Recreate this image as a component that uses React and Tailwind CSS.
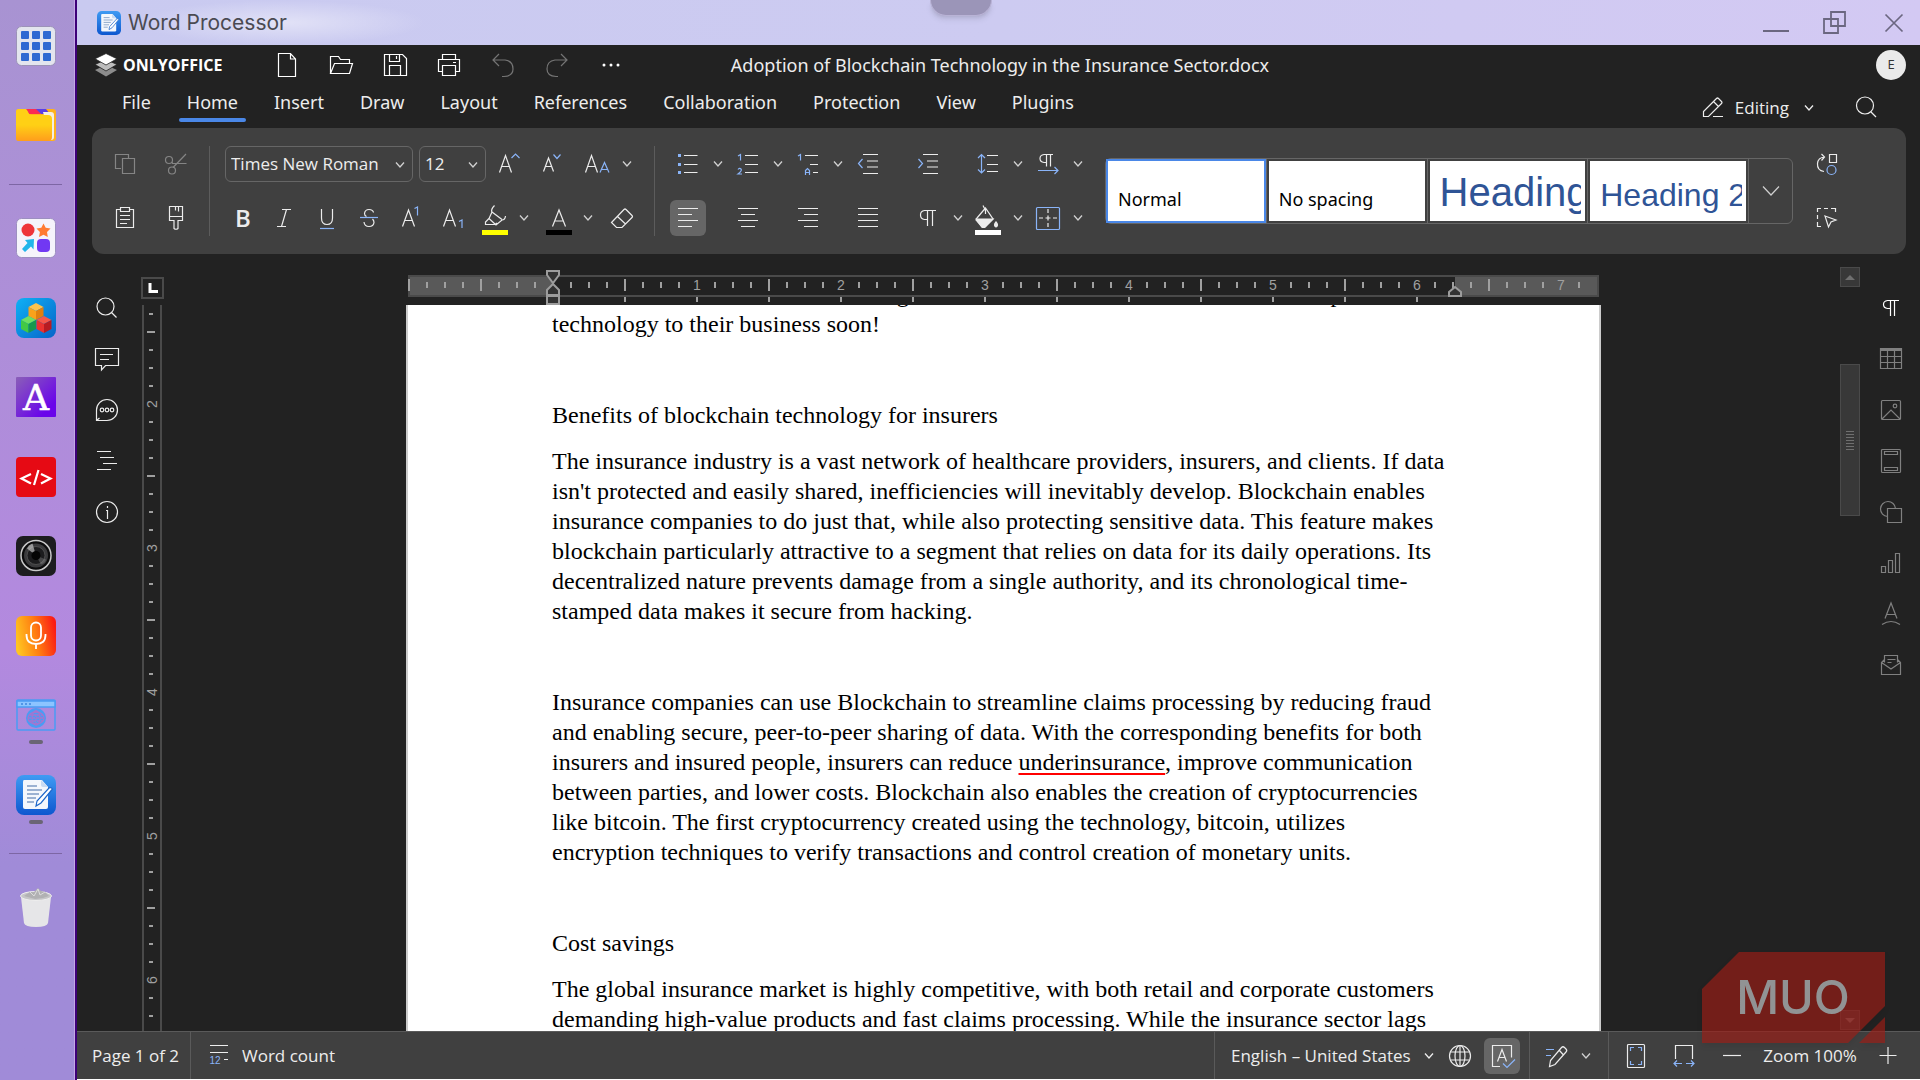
import React, { useState } from 'react';

const Icon = ({ size = 28, className = '', children }) => (
    <svg
        width={size}
        height={size}
        viewBox={`0 0 ${size} ${size}`}
        fill="none"
        stroke="currentColor"
        strokeWidth="1.2"
        className={`shrink-0 overflow-visible ${className}`}
        aria-hidden="true"
    >
        {children}
    </svg>
);

const BLUE = '#8ab4f8';

const Chevron = () => (
    <svg width="10" height="8" viewBox="0 0 10 8" fill="none" stroke="currentColor" strokeWidth="1.3" aria-hidden="true">
        <path d="M1 1.5 5 6 9 1.5" />
    </svg>
);

const ToolButton = ({ label, active, disabled, children }) => (
    <button
        type="button"
        aria-label={label}
        className={`flex h-9 w-9 shrink-0 items-center justify-center rounded-md ${active ? 'bg-[#666]' : ''} ${disabled ? 'text-[#858585]' : 'text-[#ececec]'}`}
    >
        {children}
    </button>
);

const MenuButton = ({ label, className = 'w-6' }) => (
    <button type="button" aria-label={`${label} options`} className={`flex h-9 shrink-0 items-center justify-center text-[#d0d0d0] ${className}`}>
        <Chevron />
    </button>
);

/* ---------- desktop dock ---------- */

const WordAppIcon = ({ className }) => (
    <svg viewBox="0 0 40 40" className={className} aria-hidden="true">
        <defs>
            <linearGradient id="wordBg" x1="0" y1="0" x2="0" y2="1">
                <stop offset="0" stopColor="#3f9bf3" />
                <stop offset="1" stopColor="#0d57cf" />
            </linearGradient>
        </defs>
        <rect width="40" height="40" rx="8" fill="url(#wordBg)" />
        <path d="M8 5h18l6 7v20a2 2 0 0 1-2 2H9a2 2 0 0 1-2-2V7q0-2 1-2z" fill="#f4f7fc" />
        <path d="m25 5 7 7h-5q-2 0-2-2z" fill="#c9dbf2" />
        <path d="M11 11h10M11 15h15M11 19h12M11 23h9M11 27h7" stroke="#7f9cc4" strokeWidth="1.4" />
        <path d="m20 31 1-5 12-13q2-1 3.500 1L25 28z" fill="#fff" stroke="#1d66c9" strokeWidth="1.2" />
    </svg>
);

const AppsIcon = () => (
    <svg viewBox="0 0 40 40" className="size-10" aria-hidden="true">
        <rect x=".5" y=".5" width="39" height="39" rx="5" fill="#e3e5ee" stroke="#9c93b8" />
        {[5, 16, 27].map((y) =>
            [5, 16, 27].map((x) => <rect key={`${x}${y}`} x={x} y={y} width="8" height="8" rx="1" fill="#2f69d2" />)
        )}
    </svg>
);

const FolderIcon = () => (
    <svg viewBox="0 0 40 40" className="size-10" aria-hidden="true">
        <defs>
            <linearGradient id="folder" x1="0" y1="0" x2="0" y2="1">
                <stop offset=".5" stopColor="#ffd015" />
                <stop offset="1" stopColor="#ff9d1c" />
            </linearGradient>
        </defs>
        <rect x="0" y="4" width="40" height="32" rx="3" fill="#ffb21a" />
        <path d="M10 4h11l4 5H13z" fill="#fb2c53" />
        <path d="M20 4h10l4 5h-9z" fill="#5b3fe6" />
        <path d="M27 7h8q3 0 3 3v22q0 3-3 3z" fill="#f4efe2" />
        <path d="M0 7q0-3 3-3h6q2 0 3 3t4 3h16q4 0 4 4v18q0 4-4 4H3q-3 0-3-3z" fill="url(#folder)" />
    </svg>
);

const ShapesAppIcon = () => (
    <svg viewBox="0 0 40 40" className="size-10" aria-hidden="true">
        <rect x=".5" y=".5" width="39" height="39" rx="5" fill="#f5f3fb" stroke="#9c8fc0" />
        <circle cx="12" cy="12" r="6.500" fill="#ee3439" />
        <path d="m27.500 5.500 2.200 4.300 4.800.7-3.500 3.500.8 5-4.300-2.300-4.500 2.300.9-5-3.400-3.500 4.800-.7z" fill="#ff7b33" />
        <path d="M18 21 9 22l2.500 3L6 31l3 3 6-5.500 2.500 3z" fill="#21b5ea" />
        <rect x="21" y="21" width="13" height="13" rx="4" fill="#7138f3" />
    </svg>
);

const Cube = ({ x, y, top, left, right }) => (
    <g transform={`translate(${x} ${y})`}>
        <path d="m0 4 7.500-4L15 4 7.500 8z" fill={top} />
        <path d="m0 4 7.500 4v9L0 13z" fill={left} />
        <path d="M15 4 7.500 8v9l7.500-4z" fill={right} />
    </g>
);

const CubesIcon = () => (
    <svg viewBox="0 0 40 40" className="size-10" aria-hidden="true">
        <defs>
            <linearGradient id="cubes" x1="0" y1="0" x2="1" y2="1">
                <stop offset="0" stopColor="#0fb1f5" />
                <stop offset="1" stopColor="#0764c8" />
            </linearGradient>
        </defs>
        <rect width="40" height="40" rx="8" fill="url(#cubes)" />
        <Cube x={12.5} y={5} top="#fdc34c" left="#f9a21b" right="#e07f10" />
        <Cube x={5} y={18} top="#6fe060" left="#43c944" right="#17984e" />
        <Cube x={20.5} y={18} top="#f5574a" left="#ea3330" right="#b81c22" />
    </svg>
);

const LetterIcon = () => (
    <svg viewBox="0 0 40 40" className="size-10" aria-hidden="true">
        <defs>
            <linearGradient id="letter" x1="0" y1="0" x2="1" y2="1">
                <stop offset="0" stopColor="#8a5fb8" />
                <stop offset=".8" stopColor="#6a05ea" />
            </linearGradient>
        </defs>
        <rect width="40" height="40" rx="1" fill="url(#letter)" />
        <text x="20" y="33" textAnchor="middle" fontFamily="'DejaVu Serif', serif" fontSize="36" fill="#fff" stroke="#fff" strokeWidth=".5">A</text>
    </svg>
);

const CodeIcon = () => (
    <svg viewBox="0 0 40 40" className="size-10" aria-hidden="true">
        <rect width="40" height="40" rx="4" fill="#e60a14" />
        <path d="m15 17-9.500 4.500L15 26.500M25 17l9.500 4.500-9.500 5M22.500 13l-4.500 15" fill="none" stroke="#fff" strokeWidth="2.200" />
    </svg>
);

const CameraIcon = () => (
    <svg viewBox="0 0 40 40" className="size-10" aria-hidden="true">
        <rect width="40" height="40" rx="7" fill="#1d1d1f" />
        <circle cx="20" cy="19.500" r="15" fill="#0b0b0c" stroke="#c9c9c9" strokeWidth="1.500" />
        <circle cx="20" cy="19.500" r="12" fill="#3a3a3c" />
        <circle cx="20" cy="19.500" r="9" fill="#1c1c1e" stroke="#555" strokeWidth=".8" />
        <path d="m20 19.500-9-7q2-4 5.500-5z" fill="#d8d8d8" opacity=".6" />
        <path d="m20 19.500 5 9q4-1 5-5z" fill="#aaa" opacity=".3" />
        <circle cx="20" cy="19.500" r="4.500" fill="#050505" />
    </svg>
);

const MicIcon = () => (
    <svg viewBox="0 0 40 40" className="size-10" aria-hidden="true">
        <defs>
            <linearGradient id="mic" x1="0" y1=".6" x2="1" y2=".4">
                <stop offset="0" stopColor="#ffc521" />
                <stop offset=".5" stopColor="#ff7d11" />
                <stop offset="1" stopColor="#fb1b14" />
            </linearGradient>
        </defs>
        <rect width="40" height="40" rx="6" fill="url(#mic)" />
        <g fill="none" stroke="#fff" strokeWidth="1.800">
            <rect x="15" y="6.500" width="10" height="18" rx="5" />
            <path d="M10.500 18v1q0 9 9.500 9t9.500-9v-1M20 28v5" />
        </g>
    </svg>
);

const BrowserIcon = () => (
    <svg viewBox="0 0 40 40" className="size-10" aria-hidden="true">
        <g fill="none" stroke="#4a9cf4" strokeWidth="1.500">
            <rect x="1" y="5" width="38" height="30" rx="1" />
            <path d="M1 6h38v6H1z" fill="#8cc4ff" />
        </g>
        <path d="M5 9h2M9 9h2M13 9h2" stroke="#3f86e0" strokeWidth="1.500" />
        <circle cx="20" cy="23" r="10" fill="#4a9cf4" />
        <g fill="none" stroke="#a476cf" strokeWidth="1.300">
            <ellipse cx="20" cy="23" rx="8" ry="6" />
            <ellipse cx="20" cy="23" rx="4" ry="7" />
            <path d="M20 15v16M12 23h16M13 20h14M13 26h14" strokeDasharray="3 1" />
        </g>
    </svg>
);

const TrashIcon = () => (
    <svg viewBox="0 0 40 40" className="size-10" aria-hidden="true">
        <path d="M5 10h30l-3 26q-1 4-12 4T8 36z" fill="#e6e6e8" />
        <ellipse cx="20" cy="9" rx="15.500" ry="4.500" fill="#c6c6c8" stroke="#eee" />
        <path d="m8 9 6-4 4 0 4-4 3 3 4 1 4 4-6 2-8 1z" fill="#b1b1b3" />
        <path d="m14 5 4 4 4-7 2 6 5-3" fill="none" stroke="#dcdcdc" />
    </svg>
);

const dockApps = [
    { name: 'Creative Suite', icon: <ShapesAppIcon /> },
    { name: 'Blocks', icon: <CubesIcon /> },
    { name: 'Font Manager', icon: <LetterIcon /> },
    { name: 'Code Editor', icon: <CodeIcon /> },
    { name: 'Camera', icon: <CameraIcon /> },
    { name: 'Voice Recorder', icon: <MicIcon /> },
    { name: 'Browser', icon: <BrowserIcon />, running: true },
    { name: 'Word Processor', icon: <WordAppIcon className="size-10" />, running: true },
];

const Dock = () => (
    <aside className="flex w-[77px] shrink-0 flex-col items-center border-r-2 border-[#3d0078] bg-linear-to-b from-[#a893d2] via-[#b389df] via-60% to-[#a08bd8] to-80% pt-[26px] pr-1 shadow-[inset_-1px_0_0_#c3a8e6]">
        <button type="button" aria-label="Applications"><AppsIcon /></button>
        <button type="button" aria-label="Files" className="mt-[39px]"><FolderIcon /></button>
        <hr className="mt-[39px] w-[53px] border-[#7d66a4]" />
        <ul className="mt-[33px] flex h-[597px] flex-col justify-between">
            {dockApps.map((app) => (
                <li key={app.name} className="relative h-10">
                    <button type="button" aria-label={app.name}>{app.icon}</button>
                    {app.running && <span className="absolute -bottom-[9px] left-[13px] h-1 w-[14px] rounded-full bg-[#6a6575]" />}
                </li>
            ))}
        </ul>
        <hr className="mt-[38px] w-[53px] border-[#7d66a4]" />
        <button type="button" aria-label="Trash" className="mt-[33px]"><TrashIcon /></button>
    </aside>
);

/* ---------- window chrome ---------- */

const TitleBar = () => (
    <div className="relative flex h-[45px] shrink-0 items-center bg-linear-to-r from-[#c9caf0] via-[#cdcbf1] to-[#d3c9f3] pr-3 pl-[20px]">
        <div className="absolute inset-y-0 left-[60px] w-[290px] bg-radial from-white/45 to-transparent to-70%" />
        <WordAppIcon className="relative size-6" />
        <span className="relative ml-[7px] font-['Inter',sans-serif] text-[21px] text-[#4a4a52]">Word Processor</span>
        <div className="absolute top-0 left-1/2 ml-[-69px] h-4 w-[62px] rounded-b-2xl border border-t-0 border-[#b9b3d6] bg-[#9b95b8] shadow-md" />
        <div className="ml-auto flex items-center gap-[31px] text-[#6b6780]">
            <button type="button" aria-label="Minimize">
                <Icon><path d="M1 22h26" strokeWidth="2" /></Icon>
            </button>
            <button type="button" aria-label="Restore">
                <Icon>
                    <path d="M10 3h14v14H10zM3 10h14v14H3z" strokeWidth="1.800" />
                </Icon>
            </button>
            <button type="button" aria-label="Close">
                <Icon><path d="m5.500 5.500 17 17M22.500 5.500l-17 17" strokeWidth="1.700" /></Icon>
            </button>
        </div>
    </div>
);

const quickActions = [
    { label: 'New', path: <path d="M5.500 2.500h12l5 5.500v17.500h-17zM17.500 2.500V8h5" /> },
    { label: 'Open', path: <path d="M3.500 22.500v-17h8l2 3h9v4M3.500 22.500l4-10h18l-3 10z" /> },
    { label: 'Save', path: <path d="M3.500 3.500h18l4 4v17h-22zM8.500 3.500v7h10v-7M15.500 5v3M8.500 24.500v-10h11v10" /> },
    { label: 'Print', path: <path d="M7.500 8.500v-5h13v5M7.500 20.500h-4v-12h21v12h-4M7.500 14.500h13v10h-13zM18 11.500h3" /> },
    { label: 'Undo', disabled: true, path: <path d="m10 3-6 6 6 6M4 9h12q8 1 8 9 0 7-9 7.500h-2" /> },
    { label: 'Redo', disabled: true, path: <path d="m18 3 6 6-6 6M24 9H12q-8 1-8 9 0 7 9 7.500h2" /> },
    {
        label: 'More',
        path: (
            <g fill="currentColor" stroke="none">
                <circle cx="7" cy="14" r="1.500" />
                <circle cx="14" cy="14" r="1.500" />
                <circle cx="21" cy="14" r="1.500" />
            </g>
        ),
    },
];

const HeaderRow = () => (
    <div className="grid h-10 shrink-0 grid-cols-[1fr_auto_1fr] items-center pr-[14px] pl-[17px]">
        <div className="flex items-center">
            <svg width="24" height="24" viewBox="0 0 24 24" aria-hidden="true">
                <path d="m12 12 11 5-11 6.500L1 17z" fill="#8c8c8c" />
                <path d="m12 6.500 11 5L12 18 1 11.500z" fill="#bdbdbd" stroke="#222" strokeWidth=".8" />
                <path d="m12 .5 11 5.300L12 12 1 5.800z" fill="#fff" stroke="#222" strokeWidth=".8" />
            </svg>
            <span className="ml-[5px] w-[102px] text-[16px] font-bold text-white">ONLYOFFICE</span>
            <div className="ml-11 flex gap-[18px]">
                {quickActions.map((a) => (
                    <button key={a.label} type="button" aria-label={a.label} className={`flex h-9 w-9 items-center justify-center ${a.disabled ? 'text-[#757575]' : 'text-white'}`}>
                        <Icon>{a.path}</Icon>
                    </button>
                ))}
            </div>
        </div>
        <h1 className="pt-px font-['Noto_Sans',sans-serif] text-[18px] text-[#ededed]">Adoption of Blockchain Technology in the Insurance Sector.docx</h1>
        <span className="flex size-[30px] items-center justify-center justify-self-end rounded-full bg-[#eaeaea] text-[13px] text-[#333]">E</span>
    </div>
);

const tabs = ['File', 'Home', 'Insert', 'Draw', 'Layout', 'References', 'Collaboration', 'Protection', 'View', 'Plugins'];

const TabRow = ({ active, onSelect }) => (
    <div className="flex h-[43px] shrink-0 items-start pl-[37px]">
        <nav className="flex gap-5">
            {tabs.map((tab) => (
                <button key={tab} type="button" onClick={() => onSelect(tab)} className="flex flex-col px-2 pt-[2px] font-['Noto_Sans',sans-serif] text-[18px] leading-[31px] text-[#ededed]">
                    {tab}
                    <span className={`-mx-2 h-1 self-stretch rounded-xs ${tab === active ? 'bg-[#4a87e7]' : ''}`} />
                </button>
            ))}
        </nav>
        <div className="mt-[5px] ml-auto flex items-center pr-10 text-[#ededed]">
            <button type="button" className="flex h-9 items-center text-[17px]">
                <Icon>
                    <path d="M4.500 22.500v-5l13-13q1-1 2 0l3 3q1 1 0 2l-13 13zM14.500 7.500l5 5M14 22.500h10" />
                </Icon>
                <span className="mr-[15px] ml-2">Editing</span>
                <Chevron />
            </button>
            <button type="button" aria-label="Search" className="ml-[38px]">
                <Icon>
                    <circle cx="13" cy="11.500" r="8.500" />
                    <path d="m19 18 5 5" />
                </Icon>
            </button>
        </div>
    </div>
);

/* ---------- ribbon ---------- */

const Divider = () => <div className="mr-[15px] ml-[13px] h-[90px] w-px bg-[#5c5c5c]" />;

const SelectBox = ({ label, value, options, className }) => (
    <div className={`relative ${className}`}>
        <select aria-label={label} defaultValue={value} className="h-9 w-full appearance-none rounded-md border border-[#666] bg-transparent pl-[5px] text-[17px] text-[#ededed]">
            {options.map((o) => <option key={o}>{o}</option>)}
        </select>
        <span className="pointer-events-none absolute top-[15px] right-2 text-[#d0d0d0]"><Chevron /></span>
    </div>
);

const ClipboardGroup = () => (
    <div className="mr-[2px] ml-[15px] grid grid-cols-[36px_36px] gap-x-[15px] gap-y-[18px]">
        <ToolButton label="Copy" disabled>
            <Icon><path d="M10 18.500H4.500v-14h13V8M11.500 8.500h12v15h-12z" /></Icon>
        </ToolButton>
        <ToolButton label="Cut" disabled>
            <Icon>
                <circle cx="7" cy="10" r="3.500" />
                <circle cx="10" cy="20.500" r="3.500" />
                <path d="M24 4 11 17.500M24.500 13.500h-14L10 12" />
            </Icon>
        </ToolButton>
        <ToolButton label="Paste">
            <Icon><path d="M9.500 5.500h-4v18h17v-18h-4M9.500 3.500h9v4h-9zM9 11.500h10M9 15.500h10M9 19.500h7" /></Icon>
        </ToolButton>
        <ToolButton label="Copy style">
            <Icon><path d="M7.500 2.500h13v14H16v8q-2 1.500-4 0v-8H7.500zM7.500 12.500h13M13.500 2.500v4M16.500 2.500v5" /></Icon>
        </ToolButton>
    </div>
);

const FontGroup = () => (
    <div className="flex flex-col gap-[18px]">
        <div className="flex gap-[6px]">
            <SelectBox label="Font" value="Times New Roman" options={['Times New Roman', 'Arial', 'Courier New']} className="w-[188px]" />
            <SelectBox label="Font size" value="12" options={['10', '11', '12', '14']} className="w-[67px]" />
            <ToolButton label="Increase font size">
                <Icon>
                    <path d="m3.500 22.500 6-17 6 17M5.500 16.500h8" />
                    <path d="m15.500 8 4-4 4 4" stroke={BLUE} />
                </Icon>
            </ToolButton>
            <ToolButton label="Decrease font size">
                <Icon>
                    <path d="M5.500 21.500 10.500 8l5 13.500M7.500 16.500h6.500" />
                    <path d="m15.500 4.500 3.500 4 3.500-4" stroke={BLUE} />
                </Icon>
            </ToolButton>
            <div className="flex">
                <div className="flex w-[42px] justify-center">
                    <ToolButton label="Change case">
                        <Icon>
                            <path d="m2.500 22.500 6-17 6 17M4.500 16.500h8" />
                            <path d="m17 22.500 4.500-10 4.500 10M18.500 19.500h6" stroke={BLUE} />
                        </Icon>
                    </ToolButton>
                </div>
                <MenuButton label="Change case" className="w-[18px]" />
            </div>
        </div>
        <div className="flex gap-[6px]">
            <ToolButton label="Bold"><span className="text-[24px] leading-none font-semibold">B</span></ToolButton>
            <ToolButton label="Italic">
                <Icon><path d="M11 5.500h9M6 22.500h9M15.500 5.500l-5 17" /></Icon>
            </ToolButton>
            <ToolButton label="Underline">
                <Icon>
                    <path d="M8.500 5v9q0 6.500 5.500 6.500t5.500-6.500V5" />
                    <path d="M7 24.500h14" stroke={BLUE} />
                </Icon>
            </ToolButton>
            <ToolButton label="Strikeout">
                <Icon>
                    <path d="M18.500 8.500q-.5-3-4.500-3t-4.500 4q0 2 2 3M9 18q.5 4.500 5 4.500t5-4q0-2-1.500-3.500" />
                    <path d="M5 13.500h18" stroke={BLUE} />
                </Icon>
            </ToolButton>
            <ToolButton label="Superscript">
                <Icon>
                    <path d="m5.500 22.500 6-16.500 6 16.500M7.500 16.500h8" />
                    <path d="m17.500 4.500 3-1.500v8.500" stroke={BLUE} />
                </Icon>
            </ToolButton>
            <ToolButton label="Subscript">
                <Icon>
                    <path d="m4.500 22.500 6-16.500 6 16.500M6.500 16.500h8" />
                    <path d="m20 17.500 3-1.500v8" stroke={BLUE} />
                </Icon>
            </ToolButton>
            <div className="flex">
                <ToolButton label="Highlight color">
                    <Icon>
                        <path d="M13.500 1.500q-4 4-2.500 7M11 8l-3 6.500 7 6.500 6-5q3 0 3.500-4M21 15.500 11 8M8 14.500 4.500 18v2.500h9.500l2-1.500" />
                        <path d="M1 26h26v5H1z" fill="#ff0" stroke="none" />
                    </Icon>
                </ToolButton>
                <MenuButton label="Highlight color" className="w-[22px]" />
            </div>
            <div className="flex">
                <ToolButton label="Font color">
                    <Icon>
                        <path d="M7.500 22.500 14 6l6.500 16.500M9.500 17h9" />
                        <path d="M1 26h26v5H1z" fill="#000" stroke="none" />
                    </Icon>
                </ToolButton>
                <MenuButton label="Font color" className="w-[22px]" />
            </div>
            <ToolButton label="Clear style">
                <Icon><path d="M2.500 18.500 15 5.500q1-1 2 0l6 6q1 1 0 2L13 23.500H7.500zM8.500 12.500l8 7.500" /></Icon>
            </ToolButton>
        </div>
    </div>
);

const paragraphTools = [
    {
        label: 'Bullets',
        menu: true,
        art: (
            <>
                <path d="M10 5.500h13.500M10 14.500h13.500M10 22.500h13.500" />
                <path d="M4 5.500h3M4 14.500h3M4 22.500h3" stroke={BLUE} strokeWidth="3" />
            </>
        ),
    },
    {
        label: 'Numbering',
        menu: true,
        art: (
            <>
                <path d="M11 5.500h13M11 14.500h13M11 22.500h13" />
                <path d="m4 6 2.500-1.500v6M4 19.500q1.500-2 3-.5t-3 5h4" stroke={BLUE} />
            </>
        ),
    },
    {
        label: 'Multilevel list',
        menu: true,
        art: (
            <>
                <path d="M11 5.500h13M16 14.500h8M19 22.500h5" />
                <path d="m4 6 2.500-1.500v6M11.500 25v-4.500l2-2 2 2V25M11.500 22.500h4" stroke={BLUE} />
            </>
        ),
    },
    {
        label: 'Decrease indent',
        art: (
            <>
                <path d="M9 4.500h15M13 11h11M13 17h11M9 23.500h15" />
                <path d="m8.500 9-4 4.500 4 4.500" stroke={BLUE} />
            </>
        ),
    },
    {
        label: 'Increase indent',
        art: (
            <>
                <path d="M9 4.500h15M13 11h11M13 17h11M9 23.500h15" />
                <path d="m4.500 9 4 4.500-4 4.500" stroke={BLUE} />
            </>
        ),
    },
    {
        label: 'Line spacing',
        menu: true,
        art: (
            <>
                <path d="M13 5.500h11M13 14.500h11M13 21.500h11" />
                <path d="M7.500 4.500v18M4 8l3.500-3.500L11 8M4 19.500 7.500 23l3.500-3.500" stroke={BLUE} />
            </>
        ),
    },
    {
        label: 'Text direction',
        menu: true,
        art: (
            <>
                <path d="M19 4.500H10q-4 .5-4 4t4 4h2M12.500 4.500v12M16.500 4.500v12" />
                <path d="M4 20.500h20M20.500 17l3.500 3.500-3.500 3.500" stroke={BLUE} />
            </>
        ),
    },
    { label: 'Align left', active: true, art: <path d="M4 4.500h20M4 10.500h14M4 16.500h20M4 22.500h14" /> },
    { label: 'Align center', art: <path d="M4 4.500h20M7 10.500h14M4 16.500h20M7 22.500h14" /> },
    { label: 'Align right', art: <path d="M4 4.500h20M10 10.500h14M4 16.500h20M10 22.500h14" /> },
    { label: 'Justified', art: <path d="M4 4.500h20M4 10.500h20M4 16.500h20M4 22.500h20" /> },
    {
        label: 'Nonprinting characters',
        menu: true,
        art: <path d="M22 6.500H10.500q-4 .5-4 4.500t4 4.500H13M13.500 6.500v15.500M18.500 6.500v15.500" />,
    },
    {
        label: 'Shading',
        menu: true,
        art: (
            <>
                <path d="m9 1.500 2.500 5M11.500 4 3 14q-2 2 0 3l5 6q1.500 1 3 0l8-8zM11.500 4v6" />
                <path d="M2.500 15H19l-8 8q-1.500 1-3 0z" fill="currentColor" />
                <path d="M22 18q3 3.500 0 5-3-1.500 0-5z" fill="currentColor" />
                <path d="M1 26h26v5H1z" fill="#fff" stroke="none" />
            </>
        ),
    },
    {
        label: 'Borders',
        menu: true,
        art: (
            <>
                <path d="M14 5v4M14 11.500v5M14 19v4M5 14h4M11.500 14h5M19 14h4" />
                <rect x="2.500" y="3.500" width="23" height="22" rx="1" stroke={BLUE} />
            </>
        ),
    },
];

const ParagraphGroup = () => (
    <div className="grid grid-cols-[repeat(7,60px)] gap-y-[18px]">
        {paragraphTools.map((tool) => (
            <div key={tool.label} className="flex">
                <ToolButton label={tool.label} active={tool.active}><Icon>{tool.art}</Icon></ToolButton>
                {tool.menu && <MenuButton label={tool.label} />}
            </div>
        ))}
    </div>
);

const textStyles = [
    { name: 'Normal', look: "pt-[26px] font-['Noto_Sans',sans-serif] text-[18px] leading-6 text-black", selected: true },
    { name: 'No spacing', look: "pt-[26px] font-['Noto_Sans',sans-serif] text-[18px] leading-6 text-black" },
    { name: 'Heading 1', look: "pt-[9px] font-['Liberation_Sans',sans-serif] text-[40px] leading-[44px] text-[#2f5496]" },
    { name: 'Heading 2', look: "pt-[16px] font-['Liberation_Sans',sans-serif] text-[32px] leading-9 text-[#2f5496]" },
];

const StyleGallery = () => (
    <div className="flex h-[66px] min-w-0 flex-1 self-center rounded-md border border-[#666]">
        {textStyles.map((s) => (
            <div key={s.name} className="min-w-0 flex-1 border-r border-[#666]">
                <button
                    type="button"
                    className={`flex h-full w-full border-2 bg-white pr-1 pl-[10px] ${s.selected ? 'border-[#4a87e7]' : 'border-[#404040]'}`}
                >
                    <span className={`block w-full overflow-hidden text-left whitespace-nowrap ${s.look}`}>{s.name}</span>
                </button>
            </div>
        ))}
        <button type="button" aria-label="More styles" className="flex w-[43px] items-center justify-center text-[#d0d0d0]">
            <svg width="18" height="12" viewBox="0 0 18 12" fill="none" stroke="currentColor" strokeWidth="1.200" aria-hidden="true">
                <path d="m1 1.500 8 8.500 8-8.500" />
            </svg>
        </button>
    </div>
);

const Ribbon = () => (
    <div className="mr-[14px] ml-[15px] flex h-[126px] shrink-0 items-center rounded-xl bg-[#404040]">
        <ClipboardGroup />
        <Divider />
        <FontGroup />
        <Divider />
        <ParagraphGroup />
        <div className="ml-[15px] flex min-w-0 flex-1">
            <StyleGallery />
            <div className="mr-[61px] ml-4 flex flex-col gap-[18px]">
                <ToolButton label="Replace">
                    <Icon>
                        <path d="M16.500 4.500h7v8h-7zM11 21.500q-7-1-6.500-8 .5-6 7-6.500M8.500 4l3 3-3 3.500" />
                        <circle cx="18.500" cy="20" r="4.500" stroke={BLUE} />
                    </Icon>
                </ToolButton>
                <ToolButton label="Select">
                    <Icon>
                        <path d="M4.500 8V4.500H8M11 4.500h4M18 4.500h4.500V8M4.500 11v4M4.500 18v4.500H8" />
                        <path d="m12 12 11 4-5 2-2.500 5z" />
                    </Icon>
                </ToolButton>
            </div>
        </div>
    </div>
);

/* ---------- editor ---------- */

const leftPanel = [
    {
        label: 'Find',
        art: (
            <>
                <circle cx="12.500" cy="12.500" r="8.500" />
                <path d="m18.500 18.500 5 5" />
            </>
        ),
    },
    { label: 'Comments', art: <path d="M2.500 3.500h23v17h-13l-4 4.500v-4.500h-6zM7 9.500h13M7 14.500h9" /> },
    {
        label: 'Chat',
        art: (
            <>
                <path d="M3.500 24.500V14A10.500 10.500 0 1 1 14 24.500zM3.500 24.500l3-2.500" />
                <circle cx="9" cy="14" r="1.800" />
                <circle cx="14" cy="14" r="1.800" />
                <circle cx="19" cy="14" r="1.800" />
            </>
        ),
    },
    { label: 'Headings', art: <path d="M4 4.500h14M7 10.500h14M10 16.500h14M4 22.500h14" /> },
    {
        label: 'About',
        art: (
            <>
                <circle cx="14" cy="14" r="10.500" />
                <path d="M14.500 8v2M13 12.500h1.500V21" />
            </>
        ),
    },
];

const rightPanel = [
    { label: 'Paragraph settings', enabled: true, art: <path d="M22 6.500H10.500q-4 .5-4 4t4 4H13M13.500 6.500v15.500M17.500 6.500v15.500" /> },
    { label: 'Table settings', art: <path d="M3.500 3.500h21v20h-21zM3.500 5.500h21M10.500 5v18.500M17.500 5v18.500M3.500 11.500h21M3.500 17.500h21M4 4.500h20" /> },
    {
        label: 'Image settings',
        art: (
            <>
                <rect x="4.500" y="4.500" width="19" height="19" rx="1" />
                <circle cx="18" cy="10" r="1.800" />
                <path d="m5 23 9-9 9 9" />
            </>
        ),
    },
    {
        label: 'Header and footer settings',
        art: (
            <>
                <rect x="4.500" y="2.500" width="19" height="23" rx="1" />
                <path d="M7.500 4.500h13v3h-13zM7.500 20.500h13v3h-13z" />
            </>
        ),
    },
    { label: 'Shape settings', art: <path d="M10.500 18.500a7.500 7.500 0 1 1 8-8M10.500 10.500h14v14h-14z" /> },
    { label: 'Chart settings', art: <path d="M4.500 17.500h4v6h-4zM11.500 11.500h4v12h-4zM18.500 4.500h4v19h-4z" /> },
    { label: 'Text art settings', art: <path d="M8 18.500 14 3l6 15.500M9.500 14.500h9M5 24.500q9-6 18 0" /> },
    { label: 'Mail merge settings', art: <path d="M7.500 11.500v-7h13v7M7.500 8.500l-3 3v12h19v-12l-3-3M4.500 11.500 14 18l9.500-6.500M10.500 8.500h8M10.500 11.500h4" /> },
];

const PanelButton = ({ label, className, children }) => (
    <button type="button" aria-label={label} className={`flex size-[30px] items-center justify-center ${className}`}>
        <Icon>{children}</Icon>
    </button>
);

const INCH = 144;

const HorizontalRuler = () => {
    const zero = 147;
    const end = zero + 902;
    const ticks = [];
    for (let i = -8; i <= 57; i++) {
        const x = zero + i * 18;
        if (i % 8 === 0 && i > 0) {
            ticks.push(<text key={i} x={x} y="34" textAnchor="middle" fontSize="14" fill="#a0a0a0" fontFamily="'Liberation Sans', sans-serif">{i / 8}</text>);
        } else if (i !== 0) {
            const h = i % 4 === 0 ? 12 : 6;
            ticks.push(<rect key={i} x={x - 1} y={29 - h / 2} width="2" height={h} fill="#a0a0a0" />);
        }
    }
    const stops = [];
    for (let i = 1; i <= 12; i++) {
        stops.push(<rect key={i} x={zero + (i * INCH) / 2 - 1} y="41" width="2" height="5" fill="#a0a0a0" />);
    }
    return (
        <svg width="1195" height="49" viewBox="0 0 1195 49" className="block" aria-hidden="true">
            <rect x="2" y="19" width="1191" height="22" fill="#222" />
            <rect x="2" y="19" width={zero - 2} height="22" fill="#595959" />
            <rect x={end} y="19" width={1193 - end} height="22" fill="#595959" />
            <rect x="3" y="20" width="1189" height="20" fill="none" stroke="#4a4a4a" strokeWidth="2" />
            {ticks}
            {stops}
            <g fill="#333" stroke="#9c9c9c" strokeWidth="2">
                <path d="M141 15h12v4l-6 8-6-8z" />
                <path d="m147 28 6 6v5h-12v-5zM141 40h12v8h-12z" />
                <path d={`m${end} 31 6 5v4h-12v-4z`} />
            </g>
        </svg>
    );
};

const VerticalRuler = () => {
    const marks = [];
    for (let i = 0; i <= 39; i++) {
        const y = 8 + i * 18;
        if (i % 8 === 5) {
            marks.push(<text key={i} transform={`translate(14 ${y + 1}) rotate(-90)`} textAnchor="middle" fontSize="14" fill="#a0a0a0" fontFamily="'Liberation Sans', sans-serif">{(i - 5) / 8 + 2}</text>);
        } else {
            const w = i % 8 === 1 ? 8 : 4;
            marks.push(<rect key={i} x={8 - w / 2} y={y} width={w} height="2" fill="#a0a0a0" />);
        }
    }
    return <svg width="20" height="726" viewBox="0 0 20 726" className="block" aria-hidden="true">{marks}</svg>;
};

const Blank = () => <p className="mb-4 h-[29px]" />;

const Page = () => (
    <article className="min-h-0 flex-1 overflow-hidden border-x-2 border-[#ccc] bg-white pr-[148px] pl-[144px] font-['Liberation_Serif',serif] text-[24px] leading-[30px] text-black [&_h2]:mb-4 [&_p]:mb-4">
        <p className="-mt-[26px]">
            We had seen how the insurance indigo sector can move forward with blockchain plans to the
            <br />
            technology to their business soon!
        </p>
        <Blank />
        <h2>Benefits of blockchain technology for insurers</h2>
        <p>
            The insurance industry is a vast network of healthcare providers, insurers, and clients. If data isn't
            protected and easily shared, inefficiencies will inevitably develop. Blockchain enables insurance
            companies to do just that, while also protecting sensitive data. This feature makes blockchain
            particularly attractive to a segment that relies on data for its daily operations. Its decentralized
            nature prevents damage from a single authority, and its chronological time-stamped data makes it secure
            from hacking.
        </p>
        <Blank />
        <p>
            Insurance companies can use Blockchain to streamline claims processing by reducing fraud and enabling
            secure, peer-to-peer sharing of data. With the corresponding benefits for both insurers and insured
            people, insurers can reduce{' '}
            <span className="underline decoration-[#f00] decoration-2 underline-offset-3">underinsurance</span>,
            improve communication between parties, and lower costs. Blockchain also enables the creation of
            cryptocurrencies like bitcoin. The first cryptocurrency created using the technology, bitcoin, utilizes
            encryption techniques to verify transactions and control creation of monetary units.
        </p>
        <Blank />
        <h2>Cost savings</h2>
        <p>
            The global insurance market is highly competitive, with both retail and corporate customers demanding
            high-value products and fast claims processing. While the insurance sector lags
        </p>
    </article>
);

const Scrollbar = () => (
    <div className="flex w-5 shrink-0 flex-col pt-[13px] pb-px">
        <button type="button" aria-label="Scroll up" className="flex size-5 items-center justify-center border border-[#4a4a4a] bg-[#383838] text-[#6f6f6f]">
            <svg width="10" height="5" viewBox="0 0 10 5" fill="currentColor" aria-hidden="true"><path d="m5 0 5 5H0z" /></svg>
        </button>
        <div className="mt-[77px] flex h-[152px] flex-col items-center justify-center gap-[2px] border border-[#4a4a4a] bg-[#383838]">
            {[0, 1, 2, 3, 4, 5, 6].map((n) => <span key={n} className="h-px w-2 bg-[#6f6f6f]" />)}
        </div>
        <button type="button" aria-label="Scroll down" className="mt-auto flex size-5 items-center justify-center border border-[#4a4a4a] bg-[#383838] text-[#6f6f6f]">
            <svg width="10" height="5" viewBox="0 0 10 5" fill="currentColor" aria-hidden="true"><path d="m5 5 5-5H0z" /></svg>
        </button>
    </div>
);

const Editor = () => (
    <main className="flex min-h-0 flex-1">
        <div className="flex w-[64px] shrink-0 flex-col gap-[21px] pt-[39px] pl-[15px] text-[#ececec]">
            {leftPanel.map((p) => <PanelButton key={p.label} label={p.label}>{p.art}</PanelButton>)}
        </div>
        <div className="flex w-[26px] shrink-0 flex-col gap-[6px] overflow-hidden pt-[23px]">
            <button type="button" aria-label="Tab stop" className="flex h-[22px] w-[23px] shrink-0 items-center justify-center border-2 border-[#4a4a4a]">
                <svg width="10" height="10" viewBox="0 0 10 10" aria-hidden="true"><path d="M2 0v8.500h8" fill="none" stroke="#fff" strokeWidth="3" /></svg>
            </button>
            <div className="ml-px min-h-0 w-5 flex-1 overflow-hidden border-x-2 border-[#4a4a4a]">
                <div className="-ml-px"><VerticalRuler /></div>
            </div>
        </div>
        <div className="flex min-w-0 flex-1 justify-center overflow-hidden">
            <div className="flex w-[1195px] shrink-0 flex-col pt-[2px]">
                <HorizontalRuler />
                <Page />
            </div>
        </div>
        <Scrollbar />
        <div className="flex w-[60px] shrink-0 flex-col items-center gap-[21px] pt-[39px] pl-[2px]">
            {rightPanel.map((p) => (
                <PanelButton key={p.label} label={p.label} className={p.enabled ? 'text-white' : 'text-[#808080]'}>{p.art}</PanelButton>
            ))}
        </div>
    </main>
);

/* ---------- status bar ---------- */

const StatusDivider = ({ className = '' }) => <div className={`w-px self-stretch bg-[#5a5a5a] ${className}`} />;

const StatusBar = () => (
    <footer className="flex h-12 shrink-0 items-center border-t border-[#5a5a5a] bg-[#404040] text-[17px] text-[#ededed]">
        <span className="w-[113px] pl-[15px] whitespace-nowrap">Page 1 of 2</span>
        <StatusDivider />
        <button type="button" className="flex items-center pl-[14px]">
            <Icon>
                <path d="M5 3.500h18M5 10.500h18M19 17.500h4" />
                <text x="4.500" y="22" fontSize="10" fill={BLUE} stroke="none" fontFamily="'Liberation Sans', sans-serif">12</text>
            </Icon>
            <span className="ml-[9px]">Word count</span>
        </button>
        <StatusDivider className="ml-auto" />
        <button type="button" className="ml-4 flex w-[203px] items-center justify-between whitespace-nowrap">
            English – United States
            <Chevron />
        </button>
        <div className="ml-2 flex">
            <ToolButton label="Document language">
                <Icon>
                    <circle cx="14" cy="14" r="10.500" />
                    <ellipse cx="14" cy="14" rx="5" ry="10.500" />
                    <path d="M14 3.500v21M4.500 10h19M4.500 18h19" />
                </Icon>
            </ToolButton>
            <div className="ml-[6px]">
                <ToolButton label="Spell checking" active>
                    <Icon>
                        <path d="M12 24.500H4.500v-21h19v12M9.500 19.500l4.500-12 4.500 12M11 15.500h6" />
                        <path d="m15 21.500 4 4 8-8" stroke={BLUE} />
                    </Icon>
                </ToolButton>
            </div>
        </div>
        <StatusDivider className="ml-[9px]" />
        <div className="ml-[8px] flex">
            <ToolButton label="Track changes">
                <Icon>
                    <path d="m7.500 24.500 1-6 11-13q1.500-1.500 3 0l1.500 1.500q1.500 1.500 0 3l-11 12.500zM17 8l4.500 5" />
                    <path d="M4 7.500h8M4 13.500h5" stroke={BLUE} />
                </Icon>
            </ToolButton>
            <MenuButton label="Track changes" />
        </div>
        <StatusDivider className="ml-[10px]" />
        <div className="ml-[9px] flex items-center gap-[12px]">
            <ToolButton label="Fit to page">
                <Icon>
                    <rect x="5.500" y="2.500" width="17" height="23" rx="1" />
                    <path d="M8.500 9V5.500H12M16 5.500h3.500V9M8.500 19v3.500H12M16 22.500h3.500V19" stroke={BLUE} />
                </Icon>
            </ToolButton>
            <ToolButton label="Fit to width">
                <Icon>
                    <path d="M5.500 17V3.500h17V17" />
                    <path d="M12 21.500H4M7 18.500l-3 3 3 3M16 21.500h8M21 18.500l3 3-3 3" stroke={BLUE} />
                </Icon>
            </ToolButton>
            <ToolButton label="Zoom out"><Icon><path d="M5 13.500h18" /></Icon></ToolButton>
        </div>
        <span className="ml-3 w-[96px] text-center whitespace-nowrap">Zoom 100%</span>
        <div className="mr-[14px] ml-[12px]">
            <ToolButton label="Zoom in"><Icon><path d="M5.500 13.500h17M14 5v17" /></Icon></ToolButton>
        </div>
    </footer>
);

const Watermark = () => (
    <svg width="183" height="92" viewBox="0 0 183 92" className="pointer-events-none absolute right-[35px] bottom-[36px] opacity-65 drop-shadow-md" aria-hidden="true">
        <path d="M37 0h146v54l-37 37H0V37z" fill="#9f1c15" />
        <path d="M183 65v26h-26z" fill="#9f1c15" />
        <text x="91" y="62" textAnchor="middle" fontFamily="Inter, sans-serif" fontSize="47" fontWeight="500" fill="#cdd0d2">MUO</text>
    </svg>
);

export default function App() {
    const [tab, setTab] = useState('Home');

    return (
        <div className="relative flex h-screen overflow-hidden bg-white font-['Open_Sans',sans-serif]">
            <Dock />
            <div className="mb-px flex min-w-0 flex-1 flex-col bg-[#222]">
                <TitleBar />
                <HeaderRow />
                <TabRow active={tab} onSelect={setTab} />
                <Ribbon />
                <Editor />
                <StatusBar />
            </div>
            <Watermark />
        </div>
    );
}
